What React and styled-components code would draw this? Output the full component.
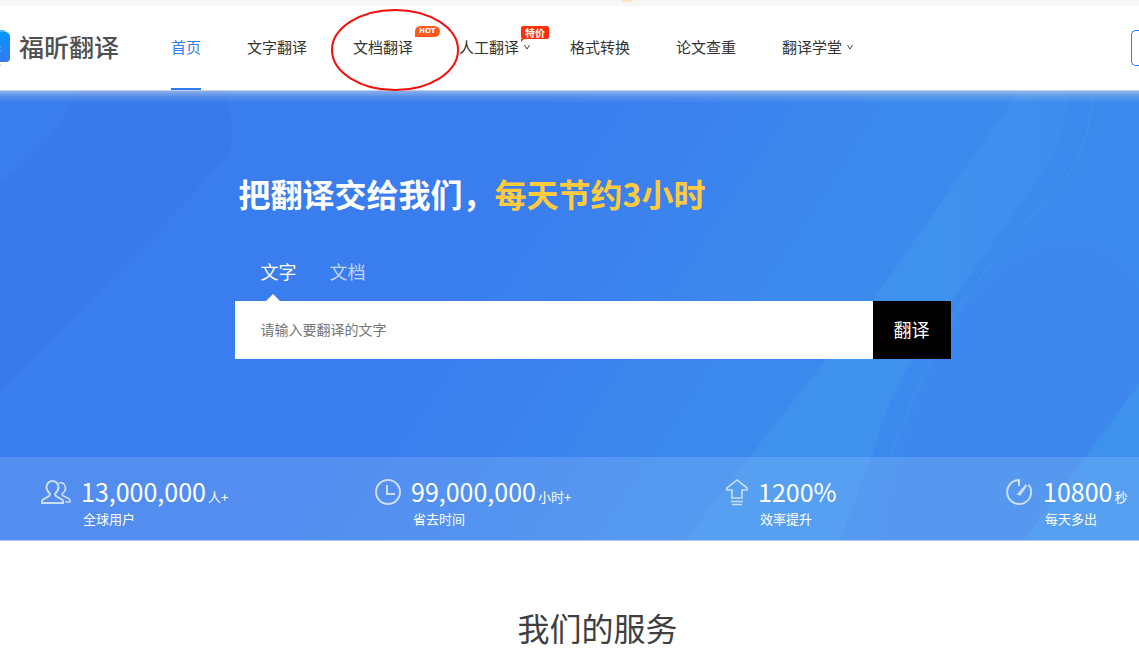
import React from "react";
import styled, { createGlobalStyle } from "styled-components";

const GlobalStyle = createGlobalStyle`
  *, *::before, *::after { box-sizing: border-box; }
  body {
    margin: 0;
    overflow-x: hidden;
    background: #fff;
    color: #333;
    font-family: "Noto Sans CJK SC", "Noto Sans", sans-serif;
  }
  button, input { font-family: inherit; }
`;

const TopStrip = styled.div`
  height: 6px;
  background: #f7f7f7;
  overflow: hidden;
`;

const StripGlow = styled.div`
  width: 12px;
  height: 3px;
  margin: -1px auto 0;
  position: relative;
  left: 57px;
  border-radius: 50%;
  background: #fbe3b4;
`;

const Header = styled.header`
  display: flex;
  align-items: center;
  height: 85px;
  background: #fff;
  border-bottom: 1px solid #c3d2ea;
`;

const Logo = styled.a`
  display: flex;
  align-items: center;
  gap: 8px;
  width: 171px;
  flex: none;
  color: #505050;
  text-decoration: none;
`;

const LogoText = styled.span`
  padding-bottom: 4px;
  font-size: 25px;
  line-height: 36px;
  font-weight: 500;
  white-space: nowrap;
`;

const Nav = styled.nav`
  display: flex;
  gap: 46px;
  height: 84px;
`;

const NavLink = styled.a`
  position: relative;
  display: flex;
  align-items: center;
  gap: 5px;
  height: 84px;
  color: ${(p) => (p.$active ? "#2f7cf0" : "#333")};
  border-bottom: 2px solid ${(p) => (p.$active ? "#2f7cf0" : "transparent")};
  font-size: 15px;
  line-height: 20px;
  text-decoration: none;
  white-space: nowrap;
`;

const Caret = styled.svg`
  width: 6px;
  height: 6px;
  margin-right: -6px;
`;

const Badge = styled.span`
  position: absolute;
  left: 62px;
  top: 20px;
  padding: 0 4px;
  background: ${(p) => (p.$hot ? "#ff5a1e" : "#ff2d0a")};
  border-radius: ${(p) => (p.$hot ? "6px 6px 6px 0" : "2px")};
  color: #fff;
  font-family: ${(p) => (p.$hot ? '"DejaVu Sans", sans-serif' : "inherit")};
  font-size: ${(p) => (p.$hot ? "7px" : "10px")};
  line-height: ${(p) => (p.$hot ? "11px" : "13px")};
  font-weight: 700;

  &::after {
    content: "";
    position: absolute;
    left: 0;
    top: 100%;
    border-top: 3px solid ${(p) => (p.$hot ? "transparent" : "#ff2d0a")};
    border-right: 3px solid transparent;
  }
`;

const Ring = styled.svg`
  position: absolute;
  left: -23px;
  top: 2px;
  width: 130px;
  height: 84px;
  z-index: 2;
  pointer-events: none;
`;

const LoginButton = styled.button`
  width: 8px;
  height: 36px;
  margin-left: auto;
  padding: 0;
  border: 1px solid #2f7cf0;
  border-right: 0;
  border-radius: 5px 0 0 5px;
  background: #fff;
`;

const Hero = styled.section`
  position: relative;
  background: #3a7dee;
  border-bottom: 1px solid #a9c8f6;
`;

const HeroArt = styled.svg`
  position: absolute;
  inset: 0;
  width: 100%;
  height: 100%;
`;

const HeroBody = styled.div`
  position: relative;
  height: 366px;
  padding: 80px 0 0 46px;
`;

const HeroInner = styled.div`
  width: 100%;
  max-width: 716px;
  margin: 0 auto;
`;

const Slogan = styled.h1`
  margin: 0;
  padding-left: 4px;
  color: #fff;
  font-size: 32px;
  line-height: 44px;
  font-weight: 700;
  white-space: nowrap;

  em {
    color: #ffcb3d;
    font-style: normal;
  }
`;

const Tabs = styled.div`
  display: flex;
  gap: 33px;
  margin-top: 38px;
  padding-left: 26px;
`;

const Tab = styled.button`
  position: relative;
  height: 48px;
  padding: 0 0 12px;
  border: 0;
  background: none;
  color: ${(p) => (p.$active ? "#fff" : "rgba(255, 255, 255, 0.7)")};
  font-size: 18px;
  line-height: 28px;

  &::after {
    content: "";
    display: ${(p) => (p.$active ? "block" : "none")};
    position: absolute;
    left: 5px;
    bottom: 0;
    border: 7px solid transparent;
    border-top: 0;
    border-bottom-color: #fff;
  }
`;

const SearchForm = styled.form`
  display: flex;
  height: 58px;
`;

const SearchInput = styled.input`
  flex: 1;
  min-width: 0;
  padding: 0 26px 2px;
  border: 0;
  border-radius: 0;
  background: #fff;
  font-size: 14px;
  color: #333;

  &::placeholder {
    color: #757575;
    opacity: 1;
  }
`;

const SearchButton = styled.button`
  width: 78px;
  padding: 0 0 2px;
  border: 0;
  background: #000;
  color: #fff;
  font-size: 18px;
`;

const Stats = styled.ul`
  position: relative;
  display: grid;
  grid-template-columns: 334fr 351fr 280fr 133fr;
  height: 83px;
  margin: 0;
  padding: 20px 0 0 41px;
  list-style: none;
  background: rgba(255, 255, 255, 0.13);
  color: #fff;
`;

const Stat = styled.li`
  display: flex;
  align-items: flex-start;
  gap: 10px;
  min-width: 0;
  white-space: nowrap;
`;

const StatIcon = styled.svg`
  flex: none;
  height: 28px;
  margin-top: 1px;
  fill: none;
  stroke: rgba(255, 255, 255, 0.7);
  stroke-width: 2;
`;

const StatValue = styled.div`
  height: 28px;
  font-size: 25px;
  line-height: 28px;

  small {
    margin-left: 2px;
    font-size: 13px;
    line-height: 1;
  }
`;

const StatLabel = styled.div`
  padding-left: 2px;
  font-size: 13px;
  line-height: 28px;
`;

const Services = styled.section`
  padding: 62px 0 0 56px;
`;

const ServicesTitle = styled.h2`
  margin: 0;
  color: #404040;
  font-size: 32px;
  line-height: 48px;
  font-weight: 400;
  text-align: center;
`;

const navItems = [
  { label: "首页", active: true },
  { label: "文字翻译" },
  { label: "文档翻译", badge: "HOT", hot: true, ringed: true },
  { label: "人工翻译", badge: "特价", menu: true },
  { label: "格式转换" },
  { label: "论文查重" },
  { label: "翻译学堂", menu: true },
];

const stats = [
  {
    value: "13,000,000",
    unit: "人+",
    label: "全球用户",
    width: 30,
    icon: (
      <>
        <path d="M1 25v-2c0-3 8-3 8-7C6 13 5.500 11 5.500 9a5.500 5.500 0 0 1 12 0c0 2-.5 4-3.500 7 0 4 8 4 8 7v2Z" />
        <path strokeWidth="1.600" d="M18 5c4-1 6.500 1.500 6.500 5 0 2-1 4-3.500 6 0 3.500 8 3 8 6.500V24h-5" />
      </>
    ),
  },
  {
    value: "99,000,000",
    unit: "小时+",
    label: "省去时间",
    width: 26,
    icon: (
      <>
        <circle cx="13" cy="14" r="12" />
        <path d="M12 7v9h8" />
      </>
    ),
  },
  {
    value: "1200%",
    label: "效率提升",
    width: 22,
    icon: (
      <path
        strokeWidth="1.6"
        d="M11 2 1 10v2h5v8h10v-8h5v-2ZM5 23.500h12M6 26.500h10"
      />
    ),
  },
  {
    value: "10800",
    unit: "秒",
    label: "每天多出",
    width: 27,
    icon: (
      <>
        <path d="M22.500 6.500A12 12 0 1 1 13 2v6" />
        <path d="m12.500 16 8-9-6.500 9.500Z" />
      </>
    ),
  },
];

function HeroBackground() {
  return (
    <HeroArt viewBox="0 0 1139 449" preserveAspectRatio="none" aria-hidden="true">
      <defs>
        <linearGradient id="base" gradientUnits="userSpaceOnUse" x1="500" y1="60" x2="760" y2="230">
          <stop offset="0" stopColor="#3a7dee" />
          <stop offset="0.5" stopColor="#3b82ee" />
          <stop offset="1" stopColor="#3c8aee" />
        </linearGradient>
        <linearGradient id="shade" x1="0" y1="0" x2="0" y2="1">
          <stop offset="0" stopColor="#c3d2e8" stopOpacity="0.6" />
          <stop offset="0.5" stopColor="#c3d2e8" stopOpacity="0.18" />
          <stop offset="1" stopColor="#c3d2e8" stopOpacity="0" />
        </linearGradient>
        <linearGradient id="band" x1="0" y1="0" x2="1" y2="0">
          <stop offset="0.7" stopColor="#3f91ee" />
          <stop offset="1" stopColor="#3d8dee" />
        </linearGradient>
      </defs>
      <rect width="1139" height="449" fill="url(#base)" />
      <path d="M75 0H225Q234 30 229 65L0 302V91Q60 50 75 0Z" fill="#387aeb" />
      <path d="M1020 0h48q0 50-35 95L931 240q-43 60-60 128L840 449H685L748 368 872 210Z" fill="url(#band)" />
      <path d="M1075 152q34 0 64 48V449H880q25-120 70-210 60-87 125-87Z" fill="#3d88ee" />
      <path d="M1139 293V449H1024L1084 368Z" fill="#3f91ee" />
      <path d="M1092 0q0 60-34 96c-50 55-97 110-115 150q-25 45-45 100l-18 40" fill="none" stroke="#408fee" strokeWidth="2" />
      <rect width="1139" height="12" fill="url(#shade)" />
    </HeroArt>
  );
}

export default function App() {
  return (
    <>
      <GlobalStyle />
      <TopStrip>
        <StripGlow />
      </TopStrip>
      <Header>
        <Logo href="#home">
          <svg width="11" height="38" viewBox="0 0 11 38" aria-hidden="true">
            <defs>
              <linearGradient id="logoFill" x1="0" y1="0" x2="0" y2="1">
                <stop offset="0" stopColor="#0795ff" />
                <stop offset="1" stopColor="#3378f0" />
              </linearGradient>
            </defs>
            <path d="M0 1h3q3 0 4 4H0Z" fill="#4db8ff" />
            <path d="M0 3h6q4 1 4 5v21q0 4-4 4H0Z" fill="url(#logoFill)" />
            <path d="M0 18h1M0 22h1M0 36h1" stroke="#8bc8ff" />
          </svg>
          <LogoText>福昕翻译</LogoText>
        </Logo>
        <Nav>
          {navItems.map((item) => (
            <NavLink key={item.label} href="#nav" $active={item.active}>
              {item.label}
              {item.menu && (
                <Caret viewBox="0 0 6 6" aria-hidden="true">
                  <path d="M.5 1 3 5 5.500 1" fill="none" stroke="#444" />
                </Caret>
              )}
              {item.badge && <Badge $hot={item.hot}>{item.badge}</Badge>}
              {item.ringed && (
                <Ring viewBox="0 0 130 84" aria-hidden="true">
                  <ellipse cx="65" cy="42" rx="63" ry="40" fill="none" stroke="#f60d0d" strokeWidth="2" />
                </Ring>
              )}
            </NavLink>
          ))}
        </Nav>
        <LoginButton type="button" aria-label="登录" />
      </Header>
      <Hero>
        <HeroBackground />
        <HeroBody>
          <HeroInner>
            <Slogan>
              把翻译交给我们，<em>每天节约3小时</em>
            </Slogan>
            <Tabs>
              <Tab type="button" $active>文字</Tab>
              <Tab type="button">文档</Tab>
            </Tabs>
            <SearchForm onSubmit={(e) => e.preventDefault()}>
              <SearchInput type="text" aria-label="请输入要翻译的文字" placeholder="请输入要翻译的文字" />
              <SearchButton type="submit">翻译</SearchButton>
            </SearchForm>
          </HeroInner>
        </HeroBody>
        <Stats>
          {stats.map((s) => (
            <Stat key={s.label}>
              <StatIcon width={s.width} viewBox={`0 0 ${s.width} 28`} aria-hidden="true">
                {s.icon}
              </StatIcon>
              <div>
                <StatValue>
                  {s.value}
                  {s.unit && <small>{s.unit}</small>}
                </StatValue>
                <StatLabel>{s.label}</StatLabel>
              </div>
            </Stat>
          ))}
        </Stats>
      </Hero>
      <Services>
        <ServicesTitle>我们的服务</ServicesTitle>
      </Services>
    </>
  );
}
